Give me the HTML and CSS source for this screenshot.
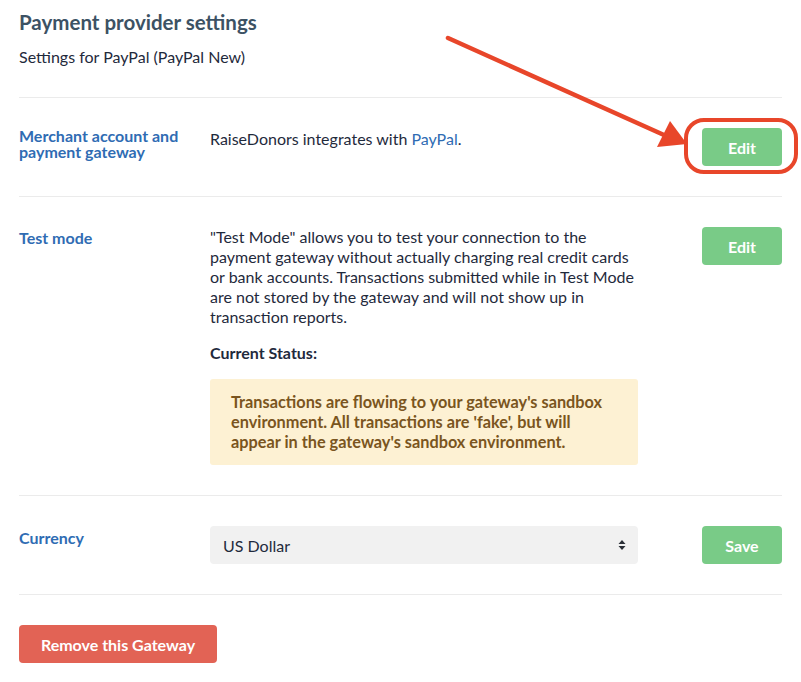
FILE: index.html
```html
<!DOCTYPE html>
<html>
<head>
<meta charset="utf-8">
<link rel="stylesheet" href="styles.css">
</head>
<body>
<div class="page">
  <h1 class="title">Payment provider settings</h1>
  <p class="subtitle">Settings for PayPal (PayPal New)</p>

  <section class="row row-first">
    <div class="label">Merchant account and payment gateway</div>
    <div class="content">
      <p class="text">RaiseDonors integrates with <a class="link" href="#">PayPal</a>.</p>
    </div>
    <div class="action">
      <button class="btn btn-green">Edit</button>
      <span class="highlight"></span>
    </div>
  </section>

  <section class="row">
    <div class="label">Test mode</div>
    <div class="content">
      <p class="text">"Test Mode" allows you to test your connection to the payment gateway without actually charging real credit cards or bank accounts. Transactions submitted while in Test Mode are not stored by the gateway and will not show up in transaction reports.</p>
      <p class="status">Current Status:</p>
      <div class="alert">Transactions are flowing to your gateway's sandbox environment. All transactions are 'fake', but will appear in the gateway's sandbox environment.</div>
    </div>
    <div class="action">
      <button class="btn btn-green">Edit</button>
    </div>
  </section>

  <section class="row">
    <div class="label label-low">Currency</div>
    <div class="content">
      <div class="select">
        <span>US Dollar</span>
        <svg class="caret" width="8" height="12" viewBox="0 0 8 12"><path d="M4 1 L7.5 5 H0.5 Z M4 11 L7.5 7 H0.5 Z" fill="#2a2f36"/></svg>
      </div>
    </div>
    <div class="action">
      <button class="btn btn-green">Save</button>
    </div>
  </section>

  <div class="footer">
    <button class="btn btn-red">Remove this Gateway</button>
  </div>

  <svg class="arrow" width="801" height="682" viewBox="0 0 801 682">
    <line x1="448" y1="38" x2="664" y2="135" stroke="#e8462a" stroke-width="4.5" stroke-linecap="round"/>
    <polygon points="687,144 657,147 670,121" fill="#e8462a"/>
  </svg>
</div>
</body>
</html>
```
FILE: styles.css
```css
* { box-sizing: border-box; }
html, body { margin: 0; padding: 0; background: #fff; }
body {
  font-family: Lato, "Liberation Sans", sans-serif;
  color: #1f2a3c;
  font-size: 16px;
}
.page {
  position: relative;
  width: 801px;
  padding: 0 19px 0 19px;
}
.title {
  margin: 0;
  padding-top: 10px;
  font-size: 20.5px;
  line-height: 24px;
  font-weight: 700;
  color: #3c5264;
}
.subtitle {
  margin: 0;
  padding-top: 12px;
  line-height: 22px;
  font-size: 16px;
  padding-bottom: 29px;
  border-bottom: 1px solid #ebebeb;
  width: 763px;
}
.row {
  display: flex;
  width: 763px;
  padding: 30px 0 30px 0;
  border-bottom: 1px solid #ebebeb;
}
.label {
  width: 191px;
  flex: none;
  padding-right: 18px;
  color: #2f6cb3;
  font-weight: 700;
  font-size: 16px;
  line-height: 16px;
  padding-top: 3px;
}
.row-first .label { padding-top: 0; }
.label-low { padding-top: 4px; }
.content {
  width: 428px;
  flex: none;
}
.text {
  margin: 0;
  line-height: 20px;
}
.row-first .text { padding-top: 1px; }
.link { color: #2f6cb3; text-decoration: none; }
.status {
  margin: 16px 0 16px 0;
  font-weight: 700;
  line-height: 20px;
}
.alert {
  background: #fdf1d3;
  color: #7a5520;
  font-weight: 700;
  font-size: 16.3px;
  line-height: 20px;
  padding: 13px 21px 13px 21px;
  border-radius: 3px;
}
.select {
  height: 38px;
  background: #f1f1f1;
  border-radius: 4px;
  display: flex;
  align-items: center;
  justify-content: space-between;
  padding: 0 12px 0 13px;
  color: #1f2a3c;
}
.action {
  flex: 1;
  display: flex;
  justify-content: flex-end;
  align-items: flex-start;
  position: relative;
}
.btn {
  font-family: inherit;
  font-weight: 700;
  font-size: 16px;
  color: #fff;
  border: none;
  border-radius: 4px;
  height: 38px;
  padding: 0;
  cursor: pointer;
}
.btn-green { background: #79cb87; width: 80px; }
.btn-red { background: #e26355; width: 198px; }
.highlight {
  position: absolute;
  right: -16px;
  top: -10px;
  width: 114px;
  height: 56px;
  border: 4px solid #e8462a;
  border-radius: 20px;
}
.footer {
  padding-top: 30px;
  padding-bottom: 19px;
}
.arrow {
  position: absolute;
  left: 0;
  top: 0;
  pointer-events: none;
}
```
